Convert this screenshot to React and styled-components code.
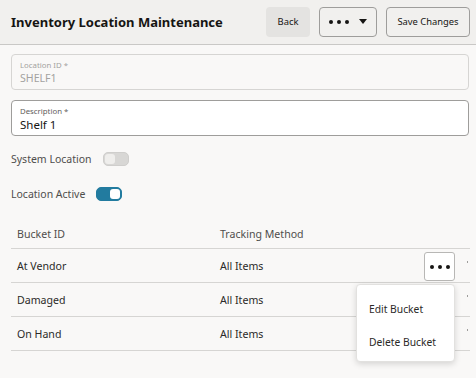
import React from "react";
import styled, { createGlobalStyle } from "styled-components";

const Global = createGlobalStyle`
  html, body { margin: 0; padding: 0; }
  body {
    background: #f9f8f7;
    font-family: "Noto Sans", "Open Sans", sans-serif;
    color: #161513;
    width: 476px;
    height: 378px;
    overflow: hidden;
  }
  * { box-sizing: border-box; }
`;

const Header = styled.header`
  height: 45px;
  display: flex;
  align-items: center;
  padding: 0 6px 6px 11px;
  background: #f1f0ee;
  border-bottom: 1px solid #c9c8c6;
`;

const Title = styled.h1`
  flex: 1;
  margin: 5px 0 0;
  font-size: 13px;
  font-weight: 700;
  color: #161513;
`;

const Actions = styled.div`
  display: flex;
  gap: 9px;
  margin-top: 5px;
`;

const Button = styled.button`
  height: 30px;
  width: ${(p) => p.$w}px;
  border-radius: 4px;
  font-family: inherit;
  font-size: 9.4px;
  color: #161513;
  display: flex;
  align-items: center;
  justify-content: center;
  gap: 10px;
  padding: 0;
  cursor: pointer;
  background: ${(p) => (p.$solid ? "#e4e3e1" : "#f1f0ee")};
  border: ${(p) => (p.$solid ? "none" : "1px solid #9e9d9b")};
`;

const Dots = styled.span`
  display: inline-flex;
  gap: 4px;
  & > i {
    width: 4px;
    height: 4px;
    border-radius: 50%;
    background: #161513;
  }
`;

const Caret = styled.span`
  width: 0;
  height: 0;
  border-left: 4.5px solid transparent;
  border-right: 4.5px solid transparent;
  border-top: 5px solid #161513;
`;

const Content = styled.main`
  padding: 9px 7px 0 11px;
`;

const Field = styled.div`
  height: 36px;
  border-radius: 4px;
  padding: 5px 8px 0;
  margin-bottom: 10px;
  background: ${(p) => (p.$disabled ? "#f9f8f7" : "#ffffff")};
  border: 1px solid ${(p) => (p.$disabled ? "#d6d5d3" : "#9e9d9b")};
  display: flex;
  flex-direction: column;
`;

const FieldLabel = styled.label`
  font-size: 7.8px;
  line-height: 11px;
  color: ${(p) => (p.$disabled ? "#a3a2a0" : "#5f5e5c")};
`;

const FieldValue = styled.div`
  font-size: ${(p) => (p.$disabled ? "10.6px" : "11.5px")};
  line-height: 15px;
  color: ${(p) => (p.$disabled ? "#a3a2a0" : "#161513")};
`;

const SwitchRow = styled.div`
  height: 28px;
  display: flex;
  align-items: center;
  gap: 11px;
  font-size: 10.5px;
  color: #4f4e4c;
  margin-top: ${(p) => p.$mt}px;
`;

const Switch = styled.span`
  position: relative;
  width: 26px;
  height: 14px;
  border-radius: 5px;
  background: ${(p) => (p.$on ? "#227b9f" : "#d8d7d5")};
  border: 1px solid ${(p) => (p.$on ? "#227b9f" : "#cfcecc")};
  &::after {
    content: "";
    position: absolute;
    top: 1px;
    ${(p) => (p.$on ? "right: 1px;" : "left: 1px;")}
    width: 10px;
    height: 10px;
    border-radius: 3px;
    background: ${(p) => (p.$on ? "#ffffff" : "#efeeec")};
  }
`;

const Table = styled.div`
  margin-top: 11px;
  width: 459px;
  display: grid;
  grid-template-columns: 203px 210px 31px 15px;
`;

const Cell = styled.div`
  height: ${(p) => (p.$head ? 30 : 34)}px;
  display: flex;
  align-items: center;
  padding-left: ${(p) => (p.$action ? 0 : 6)}px;
  font-size: 10.6px;
  color: ${(p) => (p.$head ? "#4f4e4c" : "#2b2a28")};
  border-bottom: 1px solid #d6d5d3;
  position: relative;
`;

const RowButton = styled.button`
  width: 31px;
  height: 29px;
  border: 1px solid #b8b7b5;
  border-radius: 3px;
  background: #ffffff;
  padding: 0;
  display: flex;
  align-items: center;
  justify-content: center;
  margin-top: 2px;
`;

const Tick = styled.span`
  width: 1px;
  height: 2px;
  background: #9e9d9b;
  margin-left: 12px;
  margin-top: -8px;
`;

const Menu = styled.div`
  position: absolute;
  top: 35px;
  right: 0;
  width: 99px;
  height: 78px;
  background: #ffffff;
  border: 1px solid #e2e1df;
  border-radius: 4px;
  box-shadow: 0 2px 6px rgba(0, 0, 0, 0.15);
  z-index: 5;
  padding-top: 7px;
`;

const MenuItem = styled.div`
  height: 33px;
  display: flex;
  align-items: center;
  padding-left: 12px;
  font-size: 10.3px;
  color: #2b2a28;
`;

const rows = [
  { id: "At Vendor", method: "All Items", menu: true },
  { id: "Damaged", method: "All Items" },
  { id: "On Hand", method: "All Items" },
];

export default function App() {
  return (
    <>
      <Global />
      <Header>
        <Title>Inventory Location Maintenance</Title>
        <Actions>
          <Button $solid $w={44}>Back</Button>
          <Button $w={58}>
            <Dots><i /><i /><i /></Dots>
            <Caret />
          </Button>
          <Button $w={84}>Save Changes</Button>
        </Actions>
      </Header>
      <Content>
        <Field $disabled>
          <FieldLabel $disabled>Location ID *</FieldLabel>
          <FieldValue $disabled>SHELF1</FieldValue>
        </Field>
        <Field>
          <FieldLabel>Description *</FieldLabel>
          <FieldValue>Shelf 1</FieldValue>
        </Field>
        <SwitchRow $mt={-1}>
          System Location <Switch />
        </SwitchRow>
        <SwitchRow $mt={7}>
          Location Active <Switch $on />
        </SwitchRow>
        <Table>
          <Cell $head>Bucket ID</Cell>
          <Cell $head>Tracking Method</Cell>
          <Cell $head $action />
          <Cell $head $action />
          {rows.map((r) => (
            <React.Fragment key={r.id}>
              <Cell>{r.id}</Cell>
              <Cell>{r.method}</Cell>
              <Cell $action>
                {r.menu && (
                  <>
                    <RowButton>
                      <Dots><i /><i /><i /></Dots>
                    </RowButton>
                    <Menu>
                      <MenuItem>Edit Bucket</MenuItem>
                      <MenuItem>Delete Bucket</MenuItem>
                    </Menu>
                  </>
                )}
              </Cell>
              <Cell $action>
                <Tick />
              </Cell>
            </React.Fragment>
          ))}
        </Table>
      </Content>
    </>
  );
}
